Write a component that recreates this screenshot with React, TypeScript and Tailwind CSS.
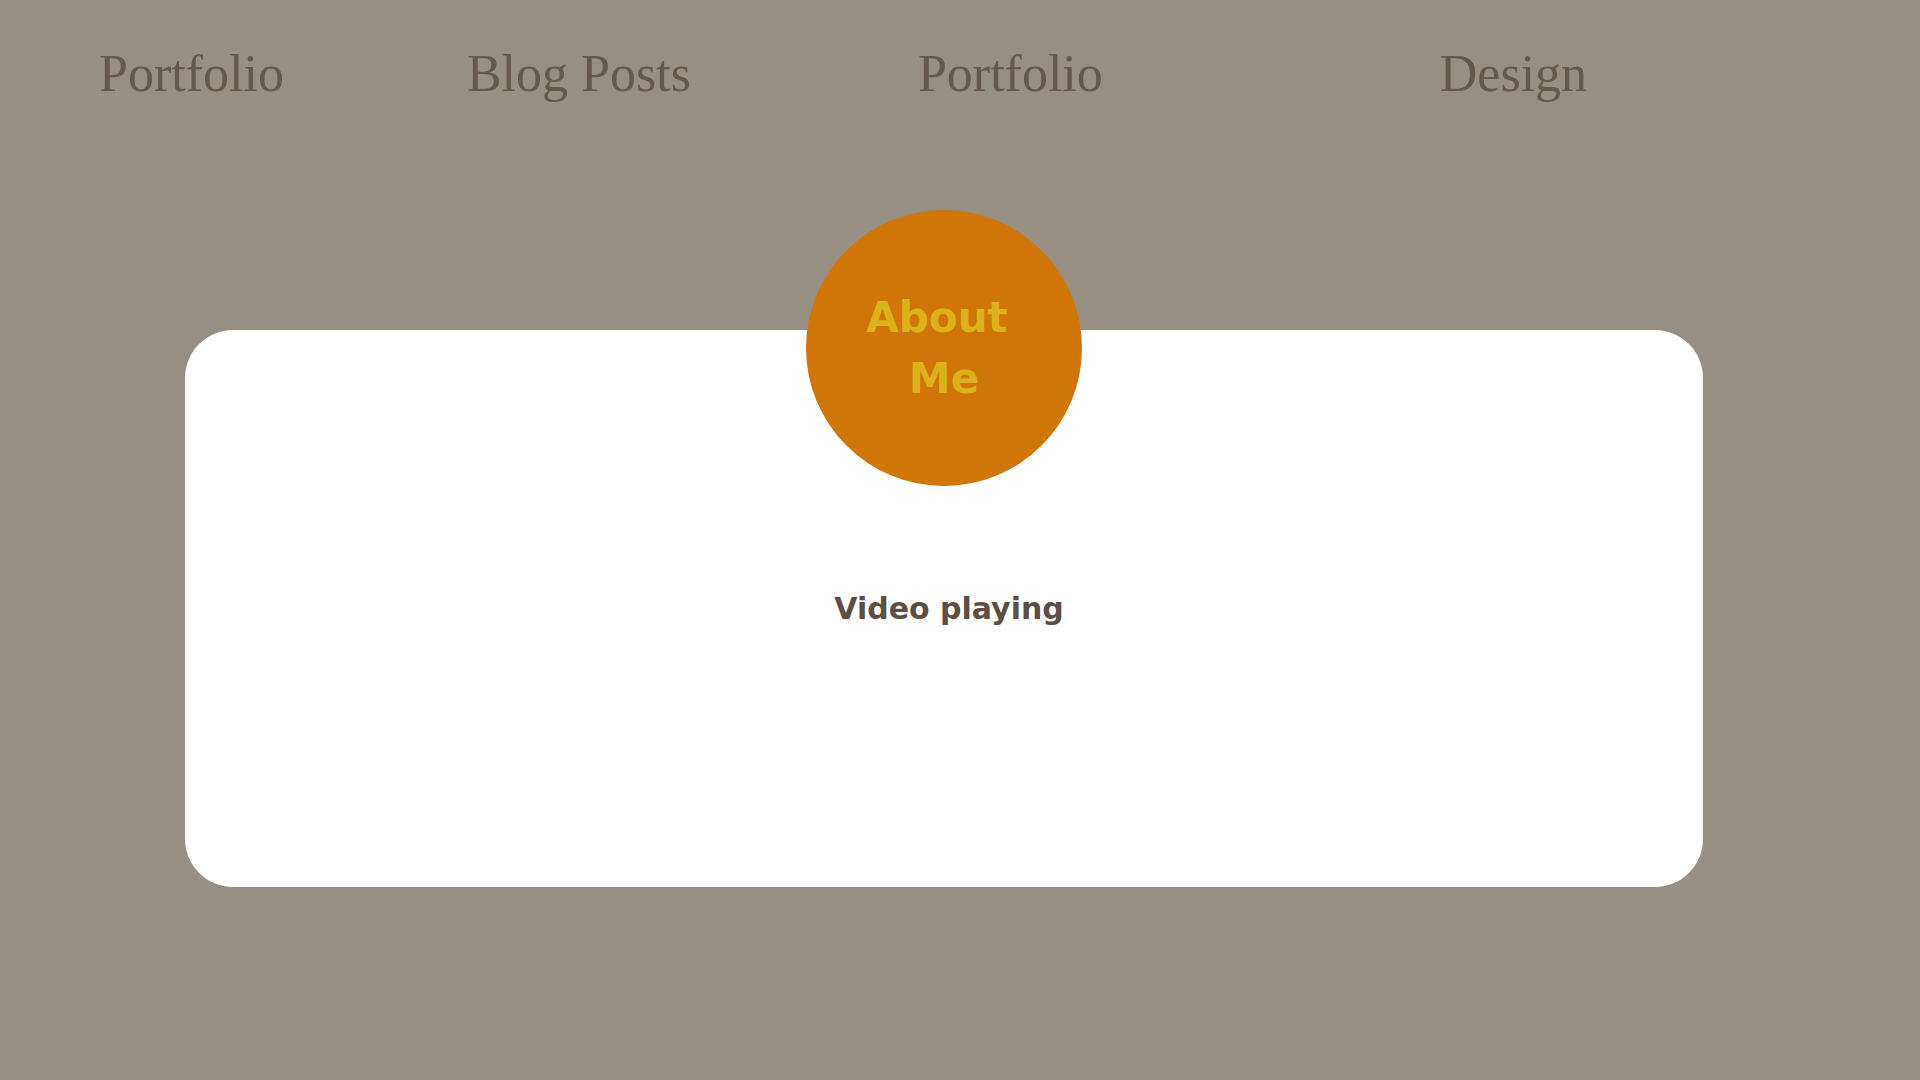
import React from 'react';

const navItems = [
  { label: 'Portfolio', cls: 'ml-[99px]' },
  { label: 'Blog Posts', cls: 'ml-[183px]' },
  { label: 'Portfolio', cls: 'ml-[227px]' },
  { label: 'Design', cls: 'ml-[337px]' },
];

export default function App() {
  return (
    <div className="w-[1920px] h-[1080px] bg-[#978f84] overflow-hidden">
      {/* Top navigation */}
      <nav className="flex pt-[48px] h-[100px]">
        {navItems.map((item, i) => (
          <a
            key={i}
            href="#"
            className={`${item.cls} block text-[52px] leading-none text-[#66584b] font-['Liberation_Serif',serif]`}
          >
            {item.label}
          </a>
        ))}
      </nav>

      {/* Main card */}
      <div className="relative ml-[185px] mt-[230px] w-[1518px] h-[557px] bg-white rounded-[48px] flex items-center justify-center">
        <div className="absolute left-1/2 -translate-x-1/2 -top-[120px] w-[276px] h-[276px] rounded-full bg-[#d07508] flex items-center justify-center">
          <h2 className="text-center text-[42px] leading-[61px] font-bold text-[#dcb21a] font-['DejaVu_Sans',sans-serif]">
            <span className="block pr-[14px]">About</span>
            <span className="block">Me</span>
          </h2>
        </div>
        <p className="pl-[10px] text-[30px] font-bold text-[#5c4e42] font-['DejaVu_Sans',sans-serif]">
          Video playing
        </p>
      </div>
    </div>
  );
}
